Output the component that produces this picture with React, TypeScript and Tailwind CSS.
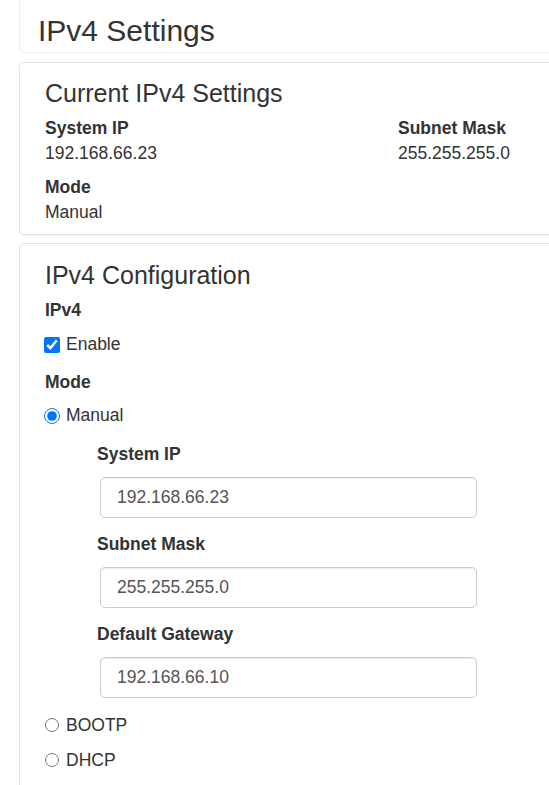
import React from "react";

const font = { fontFamily: '"Liberation Sans", Arial, Helvetica, sans-serif' };

function Field({ label, value, top }: { label: string; value: string; top: string }) {
  return (
    <div>
      <div className={`${top} ml-[52px] font-bold leading-[25px]`}>{label}</div>
      <input
        readOnly
        value={value}
        className="mt-[10px] ml-[55px] block h-[41px] w-[377px] rounded-[5px] border border-[#cccccc] bg-white px-[16px] text-[17.5px] text-[#555555] shadow-[inset_0_1px_1px_rgba(0,0,0,0.075)] outline-none"
        style={font}
      />
    </div>
  );
}

function Radio({ label, checked, top }: { label: string; checked?: boolean; top: string }) {
  return (
    <label className={`${top} flex h-[25px] items-center`}>
      {checked ? (
        <input
          type="radio"
          name="mode"
          defaultChecked
          className="m-0 ml-[-1px] h-[16px] w-[16px] accent-[#0075ff]"
        />
      ) : (
        <input
          type="radio"
          name="mode"
          className="m-0 ml-0 mt-[-2px] h-[14px] w-[14px] accent-[#0075ff]"
        />
      )}
      <span className={`${checked ? "ml-[6px]" : "ml-[7px]"} leading-[25px]`}>{label}</span>
    </label>
  );
}

export default function App() {
  return (
    <div
      className="h-[785px] w-[549px] overflow-hidden bg-white text-[17.5px] text-[#333333]"
      style={font}
    >
      <div className="w-[600px] pl-[19px]">
        {/* page title */}
        <div className="rounded-bl-[5px] border-b border-l border-[#eeeeee] pt-[14px] pb-[5px] pl-[18px]">
          <h1 className="text-[30px] leading-[33px] font-normal">IPv4 Settings</h1>
        </div>

        {/* current settings panel */}
        <div className="mt-[9px] rounded-[5px] border border-[#e3e3e3] px-[25px] pt-[16px] pb-[9px] shadow-[0_1px_1px_rgba(0,0,0,0.05)]">
          <h3 className="text-[25px] leading-[28px] font-normal">Current IPv4 Settings</h3>
          <div className="mt-[9px] grid grid-cols-[353px_1fr] leading-[25px]">
            <div>
              <div className="font-bold">System IP</div>
              <div>192.168.66.23</div>
            </div>
            <div>
              <div className="font-bold">Subnet Mask</div>
              <div>255.255.255.0</div>
            </div>
            <div className="mt-[9px]">
              <div className="font-bold">Mode</div>
              <div>Manual</div>
            </div>
          </div>
        </div>

        {/* configuration panel */}
        <div className="mt-[8px] rounded-[5px] border border-[#e3e3e3] px-[25px] pt-[17px] pb-[30px] shadow-[0_1px_1px_rgba(0,0,0,0.05)]">
          <h3 className="text-[25px] leading-[28px] font-normal">IPv4 Configuration</h3>
          <div className="mt-[9px] font-bold leading-[25px]">IPv4</div>
          <label className="mt-[9px] flex h-[25px] items-center">
            <input
              type="checkbox"
              defaultChecked
              className="m-0 ml-[-1px] h-[16px] w-[16px] accent-[#0075ff]"
            />
            <span className="ml-[6px]">Enable</span>
          </label>
          <div className="mt-[13px] font-bold leading-[25px]">Mode</div>
          <Radio top="mt-[8px]" label="Manual" checked />
          <Field top="mt-[14px]" label="System IP" value="192.168.66.23" />
          <Field top="mt-[14px]" label="Subnet Mask" value="255.255.255.0" />
          <Field top="mt-[14px]" label="Default Gateway" value="192.168.66.10" />
          <Radio top="mt-[15px]" label="BOOTP" />
          <Radio top="mt-[10px]" label="DHCP" />
        </div>
      </div>
    </div>
  );
}
